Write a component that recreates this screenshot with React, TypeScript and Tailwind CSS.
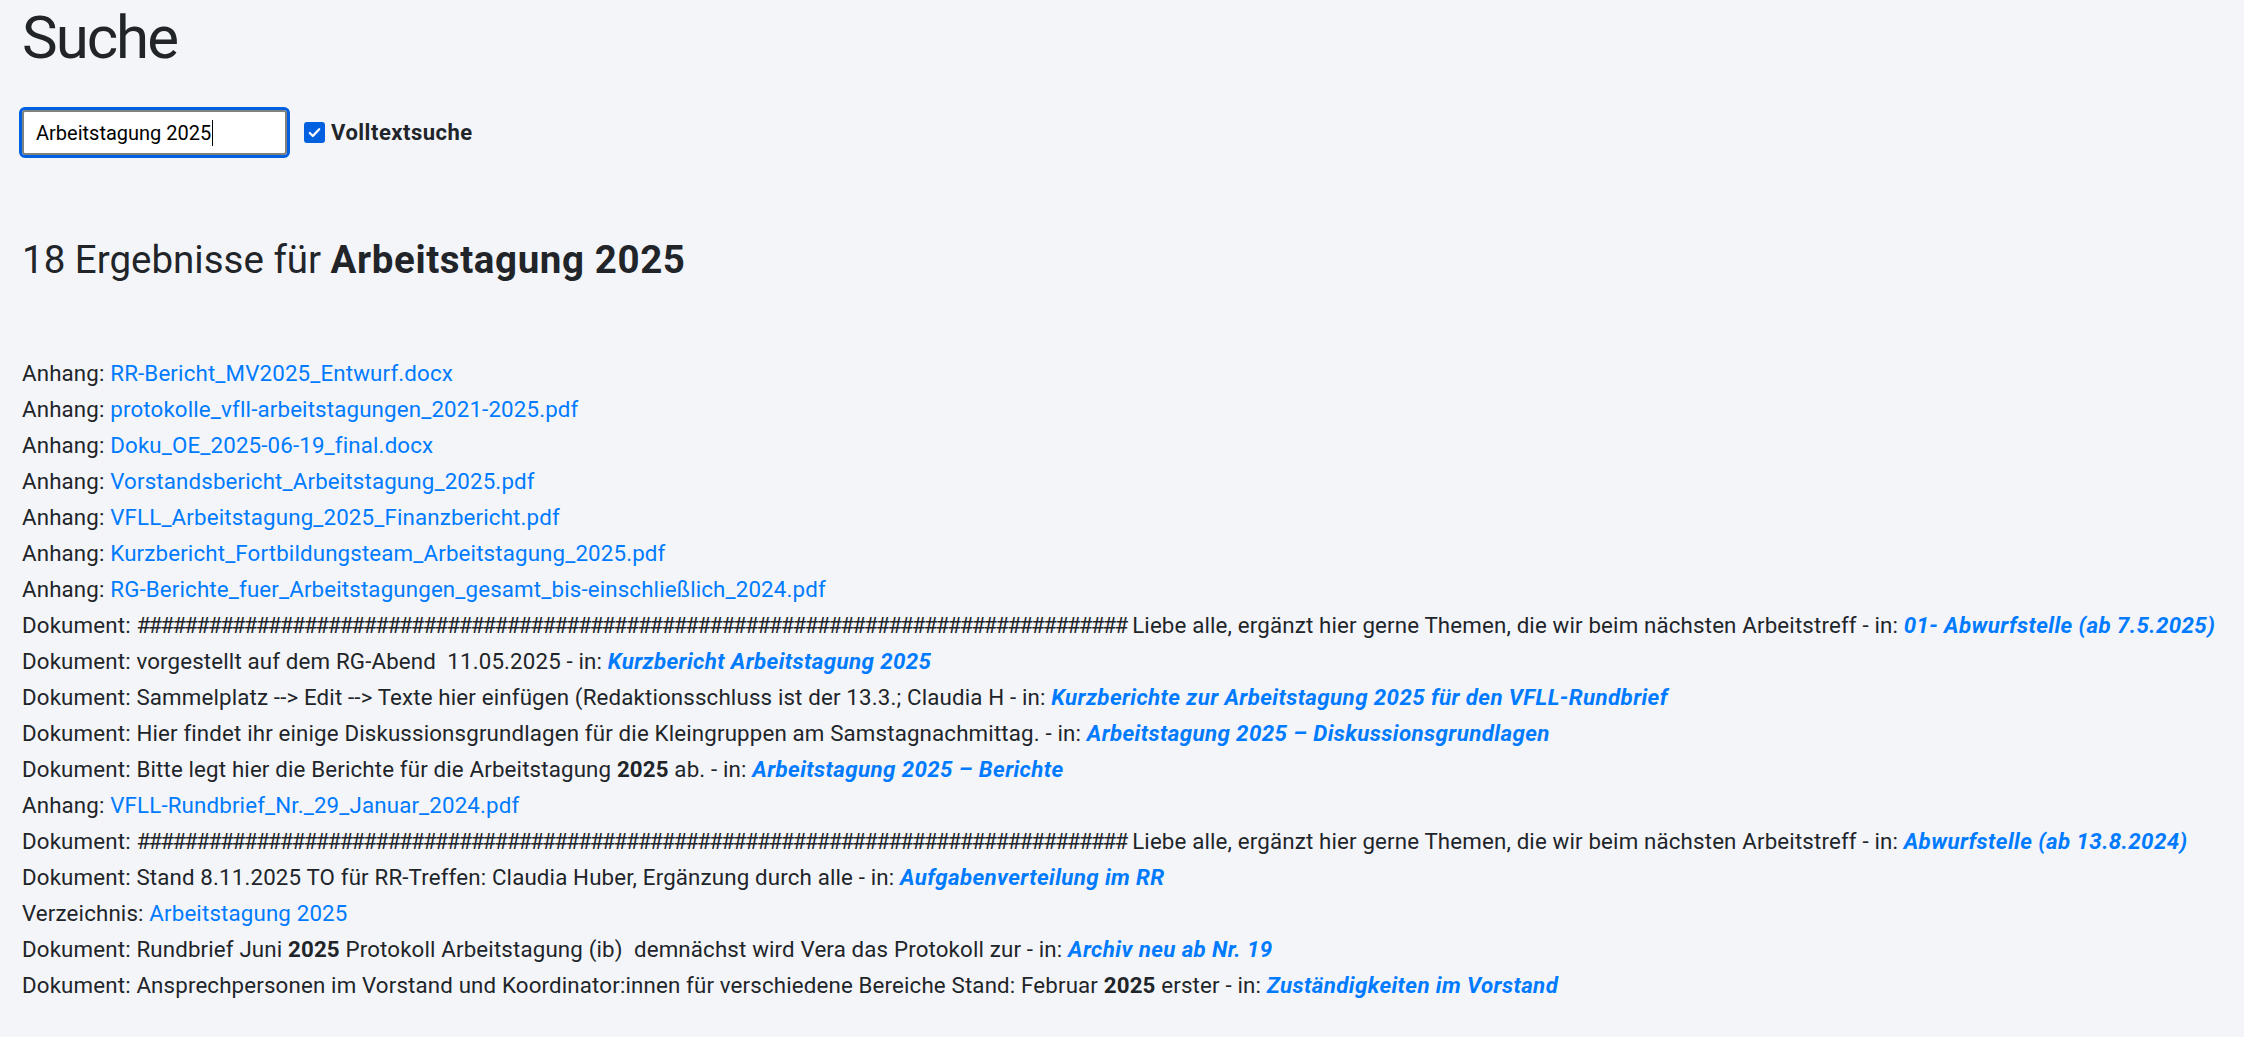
import type { ReactNode } from "react";

type Hit = {
  kind: "Anhang" | "Dokument" | "Verzeichnis";
  excerpt?: ReactNode;
  target: string;
};

// the hash run in the two "Abwurfstelle" documents
const Hashes = () => (
  <span className="tracking-[-1.8px]">{"#".repeat(83)}</span>
);

const HITS: Hit[] = [
  { kind: "Anhang", target: "RR-Bericht_MV2025_Entwurf.docx" },
  { kind: "Anhang", target: "protokolle_vfll-arbeitstagungen_2021-2025.pdf" },
  { kind: "Anhang", target: "Doku_OE_2025-06-19_final.docx" },
  { kind: "Anhang", target: "Vorstandsbericht_Arbeitstagung_2025.pdf" },
  { kind: "Anhang", target: "VFLL_Arbeitstagung_2025_Finanzbericht.pdf" },
  { kind: "Anhang", target: "Kurzbericht_Fortbildungsteam_Arbeitstagung_2025.pdf" },
  {
    kind: "Anhang",
    target: "RG-Berichte_fuer_Arbeitstagungen_gesamt_bis-einschließlich_2024.pdf",
  },
  {
    kind: "Dokument",
    excerpt: (
      <>
        <Hashes /> Liebe alle, ergänzt hier gerne Themen, die wir beim nächsten
        Arbeitstreff
      </>
    ),
    target: "01- Abwurfstelle (ab 7.5.2025)",
  },
  {
    kind: "Dokument",
    excerpt: "vorgestellt auf dem RG-Abend  11.05.2025",
    target: "Kurzbericht Arbeitstagung 2025",
  },
  {
    kind: "Dokument",
    excerpt:
      "Sammelplatz --> Edit --> Texte hier einfügen (Redaktionsschluss ist der 13.3.; Claudia H",
    target: "Kurzberichte zur Arbeitstagung 2025 für den VFLL-Rundbrief",
  },
  {
    kind: "Dokument",
    excerpt:
      "Hier findet ihr einige Diskussionsgrundlagen für die Kleingruppen am Samstagnachmittag.",
    target: "Arbeitstagung 2025 – Diskussionsgrundlagen",
  },
  {
    kind: "Dokument",
    excerpt: (
      <>
        Bitte legt hier die Berichte für die Arbeitstagung <b>2025</b> ab.
      </>
    ),
    target: "Arbeitstagung 2025 – Berichte",
  },
  { kind: "Anhang", target: "VFLL-Rundbrief_Nr._29_Januar_2024.pdf" },
  {
    kind: "Dokument",
    excerpt: (
      <>
        <Hashes /> Liebe alle, ergänzt hier gerne Themen, die wir beim nächsten
        Arbeitstreff
      </>
    ),
    target: "Abwurfstelle (ab 13.8.2024)",
  },
  {
    kind: "Dokument",
    excerpt:
      "Stand 8.11.2025 TO für RR-Treffen: Claudia Huber, Ergänzung durch alle",
    target: "Aufgabenverteilung im RR",
  },
  { kind: "Verzeichnis", target: "Arbeitstagung 2025" },
  {
    kind: "Dokument",
    excerpt: (
      <>
        Rundbrief Juni <b>2025</b> Protokoll Arbeitstagung (ib)  demnächst wird
        Vera das Protokoll zur
      </>
    ),
    target: "Archiv neu ab Nr. 19",
  },
  {
    kind: "Dokument",
    excerpt: (
      <>
        Ansprechpersonen im Vorstand und Koordinator:innen für verschiedene
        Bereiche Stand: Februar <b>2025</b> erster
      </>
    ),
    target: "Zuständigkeiten im Vorstand",
  },
];

export default function App() {
  return (
    <main className="min-h-screen bg-[#f4f5f9] px-[22px] pt-[2px] font-['Roboto','Liberation_Sans',sans-serif] text-[#212529]">
      {/* Header */}
      <h1 className="text-[60px] leading-[72px] font-normal tracking-[-2px]">
        Suche
      </h1>

      {/* Search form */}
      <div className="mt-[36px] flex h-[45px] items-center">
        <div className="flex h-[45px] w-[265px] items-center rounded-[3px] border-2 border-[#808080] bg-white pl-[12px] text-[20px] text-black outline-[3px] outline-[#0060df] outline-solid">
          <span>Arbeitstagung 2025</span>
          <span className="ml-px h-[26px] w-px bg-black" />
        </div>
        <div className="ml-[17px] flex h-[21px] w-[21px] items-center justify-center rounded-[3px] bg-[#0060df]">
          <svg viewBox="0 0 16 16" className="h-[15px] w-[15px]" fill="none">
            <path
              d="M3 8.5l3.2 3.2L13 4.5"
              stroke="white"
              strokeWidth={2.4}
              strokeLinecap="round"
              strokeLinejoin="round"
            />
          </svg>
        </div>
        <label className="ml-[6px] text-[22px] font-bold tracking-[0.5px]">
          Volltextsuche
        </label>
      </div>

      {/* Results */}
      <h4 className="mt-[82px] text-[38.5px] leading-[46px] font-normal">
        18 Ergebnisse für{" "}
        <b className="tracking-[0.6px]">Arbeitstagung 2025</b>
      </h4>

      <ul className="mt-[72px] pb-[40px] text-[22.3px] leading-[36px] tracking-[0.15px] whitespace-pre">
        {HITS.map((hit, i) => (
          <li key={i}>
            {hit.kind}:{" "}
            {hit.excerpt ? (
              <>
                {hit.excerpt} - in:{" "}
                <a className="font-bold tracking-[0.4px] text-[#007bff] italic">
                  {hit.target}
                </a>
              </>
            ) : (
              <a className="text-[#007bff]">{hit.target}</a>
            )}
          </li>
        ))}
      </ul>
    </main>
  );
}
